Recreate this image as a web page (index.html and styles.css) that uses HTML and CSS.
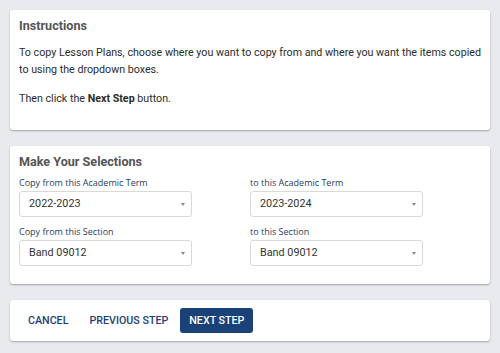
FILE: index.html
```html
<!DOCTYPE html>
<html lang="en">
<head>
    <meta charset="UTF-8">
    <meta name="viewport" content="width=device-width, initial-scale=1.0">
    <title>Copy Lesson Plans</title>
    <link rel="stylesheet" href="styles.css">
</head>
<body>
    <div class="container">
        <div class="card instructions">
            <h2>Instructions</h2>
            <p>To copy Lesson Plans, choose where you want to copy from and where you want the items copied to using the dropdown boxes.</p>
            <p>Then click the <strong>Next Step</strong> button.</p>
        </div>

        <div class="card selections">
            <h2>Make Your Selections</h2>
            <div class="field-grid">
                <div class="field">
                    <label>Copy from this Academic Term</label>
                    <div class="select">2022-2023<span class="caret"></span></div>
                </div>
                <div class="field">
                    <label>to this Academic Term</label>
                    <div class="select">2023-2024<span class="caret"></span></div>
                </div>
                <div class="field">
                    <label>Copy from this Section</label>
                    <div class="select">Band 09012<span class="caret"></span></div>
                </div>
                <div class="field">
                    <label>to this Section</label>
                    <div class="select">Band 09012<span class="caret"></span></div>
                </div>
            </div>
        </div>

        <div class="card actions">
            <button class="btn btn-text">Cancel</button>
            <button class="btn btn-text">Previous Step</button>
            <button class="btn btn-primary">Next Step</button>
        </div>
    </div>
</body>
</html>
```

FILE: styles.css
```css
:root {
    --bg: #e9eaee;
    --card: #ffffff;
    --heading: #555555;
    --text: #2b2b2b;
    --navy: #1b4278;
    --label: #2a3c5c;
    --border: #d9d9d9;
}

* {
    margin: 0;
    padding: 0;
    box-sizing: border-box;
}

body {
    font-family: Roboto, "Liberation Sans", sans-serif;
    background-color: var(--bg);
    color: var(--text);
}

.container {
    padding: 10px;
    display: flex;
    flex-direction: column;
    gap: 16px;
}

.card {
    background-color: var(--card);
    border-radius: 3px;
    box-shadow: 0 1px 2px rgba(0, 0, 0, 0.3);
    padding: 8px 9px;
}

.card h2 {
    font-size: 12.6px;
    font-weight: bold;
    color: var(--heading);
    line-height: 16px;
}

.instructions {
    height: 120px;
}

.instructions h2 {
    margin-bottom: 11px;
}

.instructions p {
    font-size: 10.7px;
    line-height: 16.5px;
    margin-bottom: 13px;
}

.selections {
    height: 138px;
}

.selections h2 {
    margin-bottom: 7px;
}

.field-grid {
    display: grid;
    grid-template-columns: 231px 231px;
    row-gap: 9px;
}

.field label {
    display: block;
    font-family: "Open Sans", sans-serif;
    font-size: 9px;
    line-height: 12px;
    color: var(--label);
    margin-bottom: 2px;
}

.select {
    position: relative;
    width: 173px;
    height: 26px;
    border: 1px solid var(--border);
    border-radius: 3px;
    padding: 0 9px;
    font-size: 10.8px;
    line-height: 24px;
    color: #333333;
}

.caret {
    position: absolute;
    right: 6px;
    top: 11px;
    border-left: 2px solid transparent;
    border-right: 2px solid transparent;
    border-top: 3px solid #888888;
}

.actions {
    height: 41px;
    display: flex;
    align-items: center;
    gap: 3px;
    padding: 0 9px;
}

.btn {
    font-family: Roboto, "Liberation Sans", sans-serif;
    font-size: 10.7px;
    font-weight: 500;
    text-transform: uppercase;
    height: 25px;
    padding: 0 9px;
    border: none;
    border-radius: 3px;
    cursor: pointer;
}

.btn-text {
    background: none;
    color: var(--navy);
}

.btn-primary {
    background-color: var(--navy);
    color: #ffffff;
}
```
